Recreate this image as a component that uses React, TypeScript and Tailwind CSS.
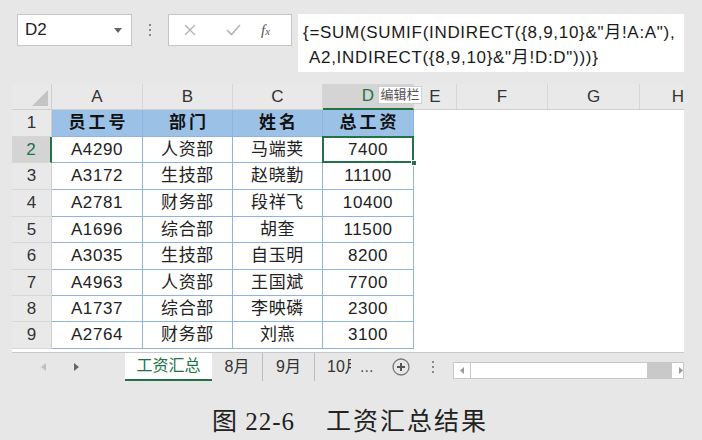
import React from 'react';

const cols = ['A', 'B', 'C', 'D', 'E', 'F', 'G', 'H'];
const rowHeights = ['h-[27px]', 'h-[26px]', 'h-[27px]', 'h-[27px]', 'h-[26px]', 'h-[27px]', 'h-[26px]', 'h-[26px]', 'h-[27px]'];

const data = [
  ['员工号', '部门', '姓名', '总工资'],
  ['A4290', '人资部', '马端荚', '7400'],
  ['A3172', '生技部', '赵晓勤', '11100'],
  ['A2781', '财务部', '段祥飞', '10400'],
  ['A1696', '综合部', '胡奎', '11500'],
  ['A3035', '生技部', '自玉明', '8200'],
  ['A4963', '人资部', '王国斌', '7700'],
  ['A1737', '综合部', '李映磷', '2300'],
  ['A2764', '财务部', '刘燕', '3100'],
];

const sans = 'font-["Liberation_Sans","Noto_Sans_CJK_SC",sans-serif]';

function FormulaBar() {
  return (
    <div className="flex items-start h-[84px] pt-[14px]">
      <div className="ml-[17px] w-[115px] h-[32px] bg-white border border-[#c6c6c6] flex items-center justify-between pl-[7px] pr-[9px]">
        <span className="text-[17px] text-[#222]">D2</span>
        <svg width="8" height="5" viewBox="0 0 8 5"><path d="M0 0h8L4 5z" fill="#666" /></svg>
      </div>
      <div className="w-[36px] h-[32px] flex flex-col items-center justify-center gap-[3px]">
        <span className="w-[2px] h-[2px] bg-[#888]" />
        <span className="w-[2px] h-[2px] bg-[#888]" />
        <span className="w-[2px] h-[2px] bg-[#888]" />
      </div>
      <div className="w-[124px] h-[32px] bg-white border border-[#c6c6c6] flex items-center">
        <svg className="ml-[15px]" width="12" height="12" viewBox="0 0 12 12">
          <path d="M1 1l10 10M11 1L1 11" stroke="#b5b5b5" strokeWidth="1.4" />
        </svg>
        <svg className="ml-[30px]" width="15" height="12" viewBox="0 0 15 12">
          <path d="M1 6l4.5 4.5L14 1" stroke="#b5b5b5" strokeWidth="1.6" fill="none" />
        </svg>
        <span className="ml-[20px] text-[15px] italic text-[#555] font-['Liberation_Serif',serif]">f<span className="text-[11px]">x</span></span>
      </div>
      <div className="ml-[6px] w-[386px] h-[58px] bg-white pl-[5px] pt-[6px] text-[17px] leading-[25px] text-[#1a1a1a] tracking-[0.7px] whitespace-nowrap">
        <div>{'{=SUM(SUMIF(INDIRECT({8,9,10}&"月!A:A"),'}</div>
        <div className="pl-[6px]">{'A2,INDIRECT({8,9,10}&"月!D:D")))}'}</div>
      </div>
    </div>
  );
}

function Sheet() {
  return (
    <div className="relative ml-[12px] w-[672px] bg-white">
      <div className="grid grid-cols-[40px_91px_90px_90px_91px_43px_91px_92px_44px]">
        {/* column header row */}
        <div className="h-[26px] bg-[#e9e9e9] border-r border-b border-[#cfcfcf] relative">
          <svg className="absolute right-[3px] bottom-[3px]" width="16" height="16" viewBox="0 0 16 16">
            <path d="M16 0v16H0z" fill="#c4c4c4" />
          </svg>
        </div>
        {cols.map((c) => (
          <div
            key={c}
            className={`h-[26px] flex items-center justify-center text-[17px] border-r border-[#d6d6d6] ${
              c === 'D' ? 'bg-[#d4d4d4] text-[#217346] border-b-2 border-b-[#217346]' : 'bg-[#e9e9e9] text-[#333] border-b border-b-[#cfcfcf]'
            } ${c === 'H' ? 'justify-end border-r-0' : ''}`}
          >
            {c}
          </div>
        ))}
        {data.map((row, r) => (
          <React.Fragment key={r}>
            <div
              className={`${rowHeights[r]} flex items-center justify-center text-[17px] border-b border-[#d6d6d6] ${
                r === 1 ? 'bg-[#d4d4d4] text-[#217346] border-r-2 border-r-[#217346]' : 'bg-[#e9e9e9] text-[#333] border-r border-r-[#cfcfcf]'
              }`}
            >
              {r + 1}
            </div>
            {row.map((v, ci) => (
              <div
                key={ci}
                className={`${rowHeights[r]} flex items-center justify-center border-r border-b border-[#8db4e2] ${
                  r === 0 ? 'bg-[#9bc2e6] font-bold text-[17px] text-[#111] tracking-[3px] pl-[3px]' : 'text-[17px] text-[#222] tracking-[0.6px]'
                } ${r === 1 && ci === 3 ? 'relative' : ''}`}
              >
                {v}
                {r === 1 && ci === 3 && (
                  <>
                    <div className="absolute -left-[1px] -top-[1px] -right-[1px] -bottom-[1px] border-2 border-[#217346]" />
                    <div className="absolute -right-[4px] -bottom-[4px] w-[6px] h-[6px] bg-[#217346] border border-white" />
                  </>
                )}
              </div>
            ))}
            <div className={`${rowHeights[r]} col-span-4`} />
          </React.Fragment>
        ))}
      </div>
      <div className="h-[3px]" />
      <div className="absolute left-[366px] top-[2px] w-[44px] h-[18px] bg-white border border-[#d0d0d0] text-[13px] leading-[16px] text-[#555] text-center">
        编辑栏
      </div>
    </div>
  );
}

function TabBar() {
  return (
    <div className="ml-[12px] w-[672px] h-[30px] border-t border-[#c8c8c8] flex items-start">
      <div className="w-[113px] h-[28px] flex items-center">
        <svg className="ml-[29px]" width="5" height="8" viewBox="0 0 5 8"><path d="M5 0v8L0 4z" fill="#c0c0c0" /></svg>
        <svg className="ml-[28px]" width="5" height="8" viewBox="0 0 5 8"><path d="M0 0v8l5-4z" fill="#666" /></svg>
      </div>
      <div className="w-[87px] h-[28px] bg-white border-b-2 border-[#217346] flex items-center justify-center text-[16px] text-[#217346]">
        工资汇总
      </div>
      <div className="w-[51px] h-[28px] flex items-center justify-center text-[16px] text-[#333] border-r border-[#bdbdbd]">8月</div>
      <div className="w-[52px] h-[28px] flex items-center justify-center text-[16px] text-[#333] border-r border-[#bdbdbd]">9月</div>
      <div className="w-[65px] h-[28px] flex items-center pl-[12px] text-[16px] text-[#333] whitespace-nowrap">
        <span className="w-[24px] overflow-hidden [clip-path:inset(0_0_0_0)]">10月</span>
        <span className="ml-[9px] text-[#555]">...</span>
      </div>
      <div className="w-[42px] h-[28px] flex items-center justify-center">
        <svg width="18" height="18" viewBox="0 0 18 18">
          <circle cx="9" cy="9" r="8" fill="none" stroke="#777" strokeWidth="1.3" />
          <path d="M5 9h8M9 5v8" stroke="#555" strokeWidth="2" />
        </svg>
      </div>
      <div className="w-[22px] h-[28px] flex flex-col items-center justify-center gap-[3px]">
        <span className="w-[2px] h-[2px] bg-[#888]" />
        <span className="w-[2px] h-[2px] bg-[#888]" />
        <span className="w-[2px] h-[2px] bg-[#888]" />
      </div>
      <div className="mt-[9px] ml-[9px] w-[231px] h-[17px] bg-white border border-[#c8c8c8] flex items-center">
        <div className="w-[17px] h-full flex items-center justify-center border-r border-[#c8c8c8]">
          <svg width="4" height="7" viewBox="0 0 4 7"><path d="M4 0v7L0 3.5z" fill="#999" /></svg>
        </div>
        <div className="flex-1" />
        <div className="w-[25px] h-full bg-[#c9c9c9]" />
        <div className="w-[11px] h-full flex items-center justify-end">
          <svg width="4" height="7" viewBox="0 0 4 7"><path d="M0 0v7l4-3.5z" fill="#999" /></svg>
        </div>
      </div>
    </div>
  );
}

export default function App() {
  return (
    <div className={`w-[702px] h-[440px] bg-[#e7e7e7] overflow-hidden ${sans}`}>
      <FormulaBar />
      <Sheet />
      <TabBar />
      <div className="mt-[27px] pl-[212px] text-[25px] leading-[26px] text-[#222] tracking-[1px] font-['Liberation_Serif','Noto_Sans_CJK_SC',serif]">
        图 22-6<span className="ml-[31px] tracking-[2px]">工资汇总结果</span>
      </div>
    </div>
  );
}
